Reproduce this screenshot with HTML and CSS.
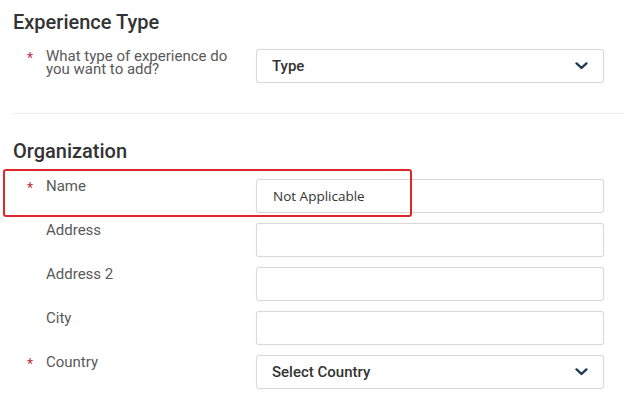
FILE: index.html
```html
<!DOCTYPE html>
<html lang="en">
<head>
    <meta charset="UTF-8">
    <meta name="viewport" content="width=device-width, initial-scale=1.0">
    <title>Add Experience</title>
    <link rel="stylesheet" href="styles.css">
</head>
<body>
    <div class="page">
        <section class="section first">
            <h2>Experience Type</h2>
            <div class="field">
                <label class="label"><span class="req">*</span><span class="text">What type of experience do you want to add?</span></label>
                <div class="select">
                    <span>Type</span>
                    <svg class="chevron" width="13" height="8" viewBox="0 0 13 8"><path d="M1.6 1.4 L6.5 6 L11.4 1.4" fill="none" stroke="#1d3a56" stroke-width="2.4" stroke-linecap="round" stroke-linejoin="round"/></svg>
                </div>
            </div>
        </section>

        <section class="section">
            <h2>Organization</h2>
            <div class="field highlighted">
                <label class="label"><span class="req">*</span><span class="text">Name</span></label>
                <input type="text" class="input" value="Not Applicable">
                <div class="callout"></div>
            </div>
            <div class="field">
                <label class="label"><span class="req"></span><span class="text">Address</span></label>
                <input type="text" class="input">
            </div>
            <div class="field">
                <label class="label"><span class="req"></span><span class="text">Address 2</span></label>
                <input type="text" class="input">
            </div>
            <div class="field">
                <label class="label"><span class="req"></span><span class="text">City</span></label>
                <input type="text" class="input">
            </div>
            <div class="field">
                <label class="label"><span class="req">*</span><span class="text">Country</span></label>
                <div class="select">
                    <span>Select Country</span>
                    <svg class="chevron" width="13" height="8" viewBox="0 0 13 8"><path d="M1.6 1.4 L6.5 6 L11.4 1.4" fill="none" stroke="#1d3a56" stroke-width="2.4" stroke-linecap="round" stroke-linejoin="round"/></svg>
                </div>
            </div>
        </section>
    </div>
</body>
</html>
```

FILE: styles.css
```css
* {
    margin: 0;
    padding: 0;
    box-sizing: border-box;
}

body {
    background: #fff;
    font-family: Roboto, "Liberation Sans", sans-serif;
    overflow: hidden;
}

.page {
    padding: 10px 0 0 13px;
}

.section.first {
    padding-bottom: 20px;
    border-bottom: 1px solid #ececec;
    margin-bottom: 25px;
}

h2 {
    font-size: 20px;
    line-height: 24px;
    font-weight: 500;
    color: #333;
    margin-bottom: 15px;
}

.section + .section h2 {
    margin-bottom: 16px;
}

.field {
    display: grid;
    grid-template-columns: 243px 348px;
    margin-bottom: 10px;
    position: relative;
}

.label {
    display: flex;
    font-size: 15px;
    line-height: 13px;
    color: #595959;
    padding-top: 1px;
}

.req {
    width: 19px;
    margin-left: 14px;
    flex-shrink: 0;
    color: #b8334a;
    font-size: 14px;
    line-height: 17px;
}

.text {
    width: 190px;
}

.input,
.select {
    height: 34px;
    border: 1px solid #d9d9d9;
    border-radius: 3px;
    background: #fff;
    box-shadow: 0 0 1px rgba(0, 0, 0, 0.12);
}

.input {
    font-family: "Open Sans", "Noto Sans", sans-serif;
    font-size: 13.5px;
    color: #333;
    padding: 0 16px;
    outline: none;
}

.select {
    display: flex;
    align-items: center;
    justify-content: space-between;
    padding: 0 15px;
    font-size: 15px;
    font-weight: 500;
    color: #333;
}

.callout {
    position: absolute;
    top: -10px;
    left: -10px;
    width: 409px;
    height: 48px;
    border: 2px solid #e0262a;
    border-radius: 3px;
    pointer-events: none;
}
```
